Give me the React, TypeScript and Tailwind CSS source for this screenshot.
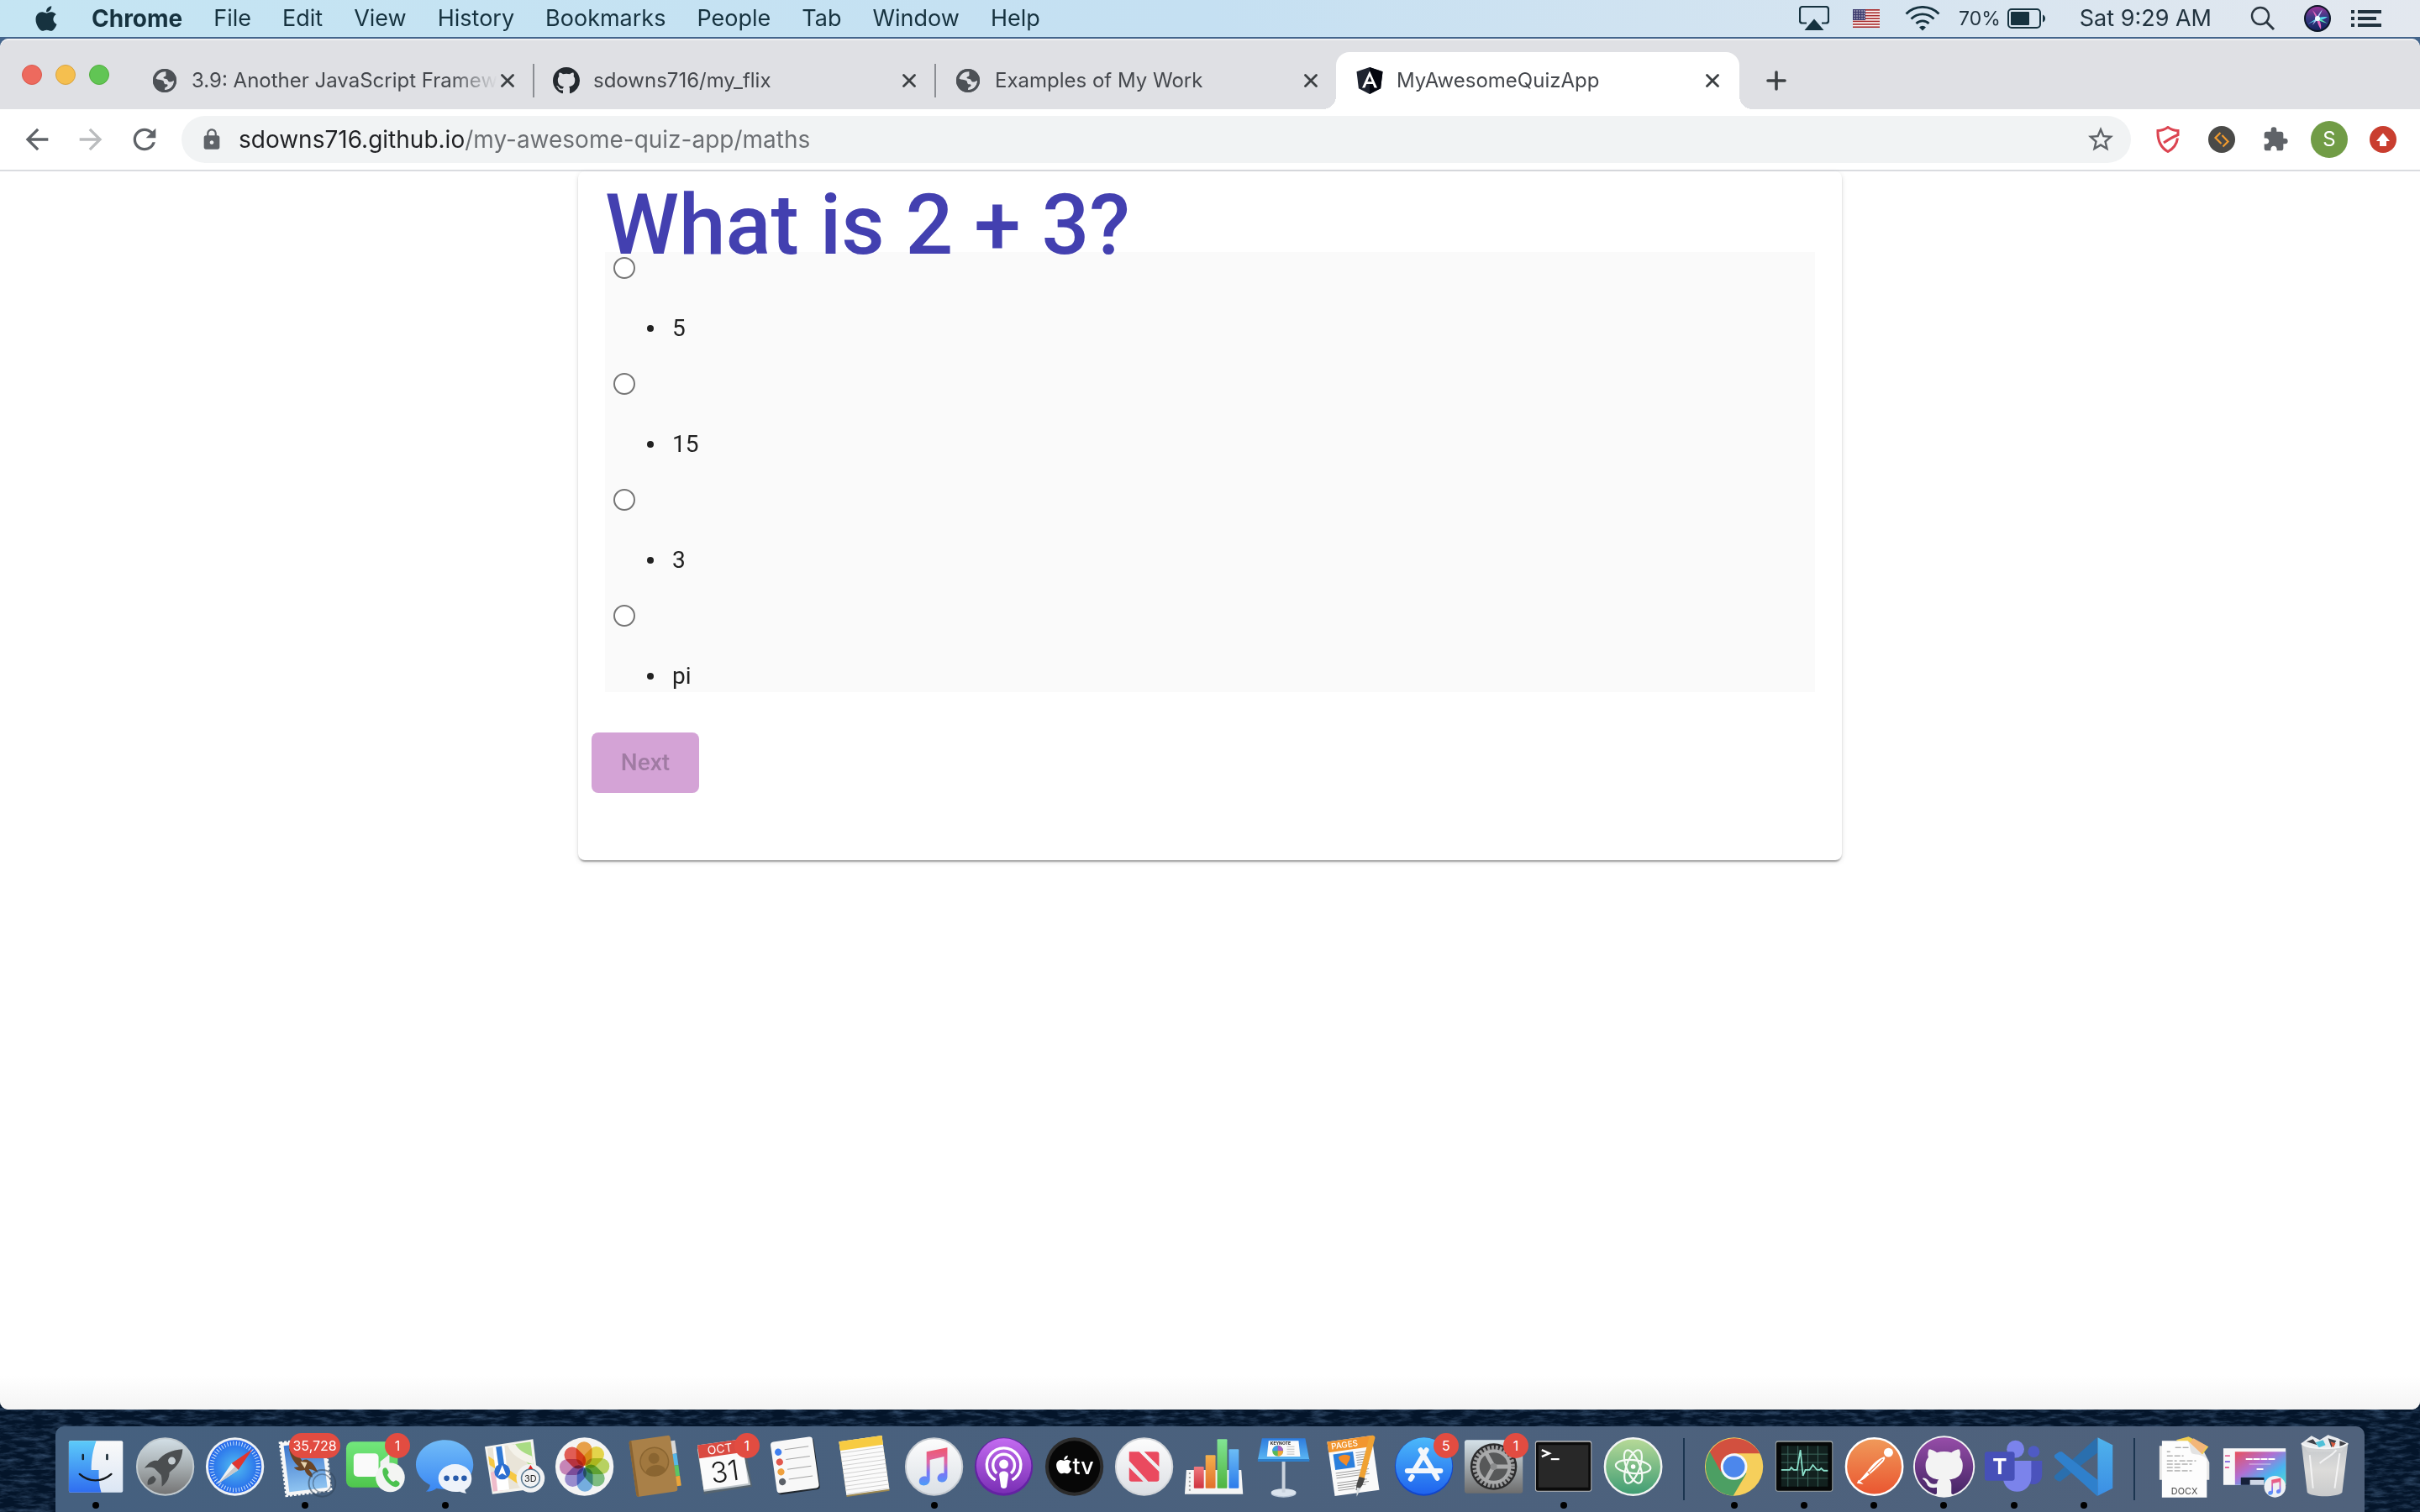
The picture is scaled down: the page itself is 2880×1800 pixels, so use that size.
import type { ReactNode } from "react";
import { FaApple } from "react-icons/fa";
import { MdArrowBack, MdArrowForward, MdExtension, MdLock, MdRefresh, MdStarBorder } from "react-icons/md";

/* ---------- Menu bar ---------- */

const menus = ["File", "Edit", "View", "History", "Bookmarks", "People", "Tab", "Window", "Help"];

function AirPlayIcon() {
  return (
    <svg className="h-[30px] w-9" viewBox="0 0 36 30">
      <path d="M9 20.500H4a3 3 0 0 1-3-3V4a3 3 0 0 1 3-3h28a3 3 0 0 1 3 3v13.500a3 3 0 0 1-3 3h-5" fill="none" stroke="#16323f" strokeWidth="2.200" />
      <path d="M18 15.500 29.500 29h-23z" fill="#16323f" />
    </svg>
  );
}

function FlagIcon() {
  return (
    <svg className="h-[22px] w-8" viewBox="0 0 32 22">
      <rect width="32" height="22" fill="#fff" />
      {[0, 1, 2, 3, 4, 5, 6].map((i) => (
        <rect key={i} y={i * 3.4} width="32" height="1.700" fill="#a82a2c" />
      ))}
      <rect width="15" height="13" fill="#3c3b6e" />
      {[2, 5, 8, 11].map((y) =>
        [2, 5, 8, 11, 13.500].map((x) => <circle key={x + "-" + y} cx={x} cy={y} r=".7" fill="#fff" />),
      )}
    </svg>
  );
}

function WifiIcon() {
  return (
    <svg className="h-[30px] w-[42px]" viewBox="0 0 42 30" fill="none" stroke="#16323f" strokeWidth="2.800">
      <path d="M1.500 9.500a27.500 27.500 0 0 1 39 0" />
      <path d="M7.500 15.500a19 19 0 0 1 27 0" />
      <path d="M13.500 21a10.600 10.600 0 0 1 15 0" />
      <path d="M21 29.500l-4-4a5.600 5.600 0 0 1 8 0z" fill="#16323f" stroke="none" />
    </svg>
  );
}

function BatteryIcon() {
  return (
    <svg className="h-6 w-[46px]" viewBox="0 0 46 24">
      <rect x="1" y="1" width="38" height="22" rx="4" fill="none" stroke="#16323f" strokeWidth="2" />
      <rect x="4" y="4" width="22" height="16" rx="1" fill="#16323f" />
      <path d="M42 7.500c4 1.500 4 7.500 0 9z" fill="#16323f" />
    </svg>
  );
}

function SiriIcon() {
  return (
    <svg className="size-8" viewBox="0 0 32 32">
      <defs>
        <linearGradient id="siri" x1=".4" y1="0" x2=".5" y2="1">
          <stop offset="0" stopColor="#a4319a" />
          <stop offset=".45" stopColor="#3a3a86" />
          <stop offset="1" stopColor="#12205c" />
        </linearGradient>
      </defs>
      <circle cx="16" cy="16" r="15" fill="url(#siri)" stroke="#0c1626" strokeWidth="2" />
      <path d="M4 23c4-3 8-5 11-7 5-2 8-2 13-2-4 3-8 4-12 4-4 1-8 3-12 5z" fill="#57d8ec" />
      <path d="M10 6c4 4 6 7 7 10 2 3 4 8 3 13-3-4-4-9-5-12-2-4-3-7-5-11z" fill="#e86ac0" />
      <path d="M22 5c-2 5-4 8-5 11l-7 8c2-5 4-8 5-9 2-3 4-7 7-10z" fill="#b4c6fa" />
      <path d="M17 15l11 7-12-4z" fill="#5be3b5" />
      <circle cx="16" cy="16" r="3" fill="#eafcff" />
    </svg>
  );
}

function MenuBar() {
  return (
    <header className="flex h-11 items-center justify-between bg-linear-to-r from-[#c5e5f3] via-[#c5e0f2] to-[#e3e8ef] pr-[46px] pl-[38px] text-[27px] text-[#16323f]">
      <nav className="flex items-center gap-[37px]">
        <button aria-label="Apple menu" className="text-[34px]">
          <FaApple />
        </button>
        <button className="text-[28px] font-bold">Chrome</button>
        {menus.map((m) => (
          <button key={m}>{m}</button>
        ))}
      </nav>
      <div className="flex items-center text-[#22333f]">
        <AirPlayIcon />
        <span className="ml-7">
          <FlagIcon />
        </span>
        <span className="ml-[30px]">
          <WifiIcon />
        </span>
        <span className="ml-[22px] text-[23px]">70%</span>
        <span className="ml-2">
          <BatteryIcon />
        </span>
        <span className="ml-10">Sat 9:29 AM</span>
        <button aria-label="Search" className="ml-[46px]">
          <svg className="size-[30px]" viewBox="0 0 30 30" fill="none" stroke="#2b3640" strokeWidth="2.400">
            <circle cx="12" cy="12" r="10" />
            <path d="M19 19l9 9" strokeWidth="3" />
          </svg>
        </button>
        <button aria-label="Siri" className="ml-[34px]">
          <SiriIcon />
        </button>
        <button aria-label="Notifications" className="ml-6">
          <svg className="h-5 w-9" viewBox="0 0 36 20" fill="#22333f">
            <path d="M0 0h4v4H0zM0 8h4v4H0zM0 16h4v4H0zM8 0h28v4H8zM8 8h22v4H8zM8 16h28v4H8z" />
          </svg>
        </button>
      </div>
    </header>
  );
}

/* ---------- Browser window ---------- */

const githubMark =
  "M8 0C3.580 0 0 3.580 0 8c0 3.540 2.290 6.530 5.470 7.590.4.070.55-.17.55-.38 0-.19-.01-.82-.01-1.490-2.010.37-2.530-.49-2.690-.94-.09-.23-.48-.94-.82-1.130-.28-.15-.68-.52-.01-.53.63-.01 1.080.58 1.230.82.72 1.210 1.870.87 2.330.66.07-.52.28-.87.51-1.070-1.780-.2-3.640-.89-3.640-3.950 0-.87.31-1.590.82-2.150-.08-.2-.36-1.020.08-2.120 0 0 .67-.21 2.200.82.64-.18 1.320-.27 2-.27s1.360.09 2 .27c1.530-1.040 2.200-.82 2.200-.82.44 1.100.16 1.920.08 2.120.51.56.82 1.270.82 2.150 0 3.070-1.870 3.750-3.650 3.950.29.25.54.73.54 1.480 0 1.070-.01 1.930-.01 2.200 0 .21.15.46.55.38A8.010 8.010 0 0 0 16 8c0-4.420-3.580-8-8-8z";

function GithubIcon() {
  return (
    <svg className="size-8" viewBox="0 0 16 16">
      <path fill="#24292e" fillRule="evenodd" d={githubMark} />
    </svg>
  );
}

function GlobeIcon() {
  return (
    <svg className="size-7" viewBox="0 0 28 28">
      <circle cx="14" cy="14" r="14" fill="#4d5156" />
      <path
        d="M15.500 3.200C9.500 3 5 6.500 3.500 11.500c2.500 1.800 6 .8 8.500 2.500 1.700 1.200.5 3.300 2.500 4.200 1.800.8 3.500-.4 3 1.800-.4 1.700-2.800 1.200-3.200 2.800-.2.800-.3 1.600-.3 2.200 6 .2 11-4.500 11-11-2 .5-3.500 2-5.300 1.500-2.500-.7-1.200-2.700-4-3.500-1.500-.4-3.500-.3-3.200-1.800.3-1.300 2.600-.6 3-2.400.2-1.500-.4-2.600 0-4.600z"
        fill="#dfe0e4"
      />
      <circle cx="14" cy="14" r="12.600" fill="none" stroke="#4d5156" strokeWidth="2.800" />
    </svg>
  );
}

function AngularIcon() {
  return (
    <svg className="size-8" viewBox="0 0 32 32">
      <path d="M16 0l15.500 5.300-2.400 20L16 32 2.900 25.300.5 5.300z" fill="#1f2430" />
      <path d="M16 0l15.500 5.300-2.400 20L16 32z" fill="#04060f" />
      <path d="M16 4.500 7 24.500h3.400l1.800-4.500h7.600l1.800 4.500H25zm0 6.300 2.700 6.500h-5.400z" fill="#fff" />
    </svg>
  );
}

function CloseIcon() {
  return (
    <svg className="size-4" viewBox="0 0 16 16" stroke="#3c4043" strokeWidth="2.800" strokeLinecap="round">
      <path d="M1.500 1.500l13 13M14.500 1.500l-13 13" />
    </svg>
  );
}

type TabProps = { icon: ReactNode; title: string; active?: boolean; divider?: boolean; fade?: boolean };

function BrowserTab({ icon, title, active, divider, fade }: TabProps) {
  return (
    <div className={active ? "relative flex h-[68px] w-[480px] items-center rounded-t-2xl bg-white px-6" : "relative flex h-[68px] w-[478px] items-center pr-[22px] pl-6"}>
      {active && (
        <>
          <span className="absolute bottom-0 -left-4 size-4 bg-[radial-gradient(circle_at_0_0,transparent_16px,white_16px)]" />
          <span className="absolute -right-4 bottom-0 size-4 bg-[radial-gradient(circle_at_100%_0,transparent_16px,white_16px)]" />
        </>
      )}
      <button role="tab" aria-selected={!!active} className="flex flex-1 items-center gap-4">
        <span className="flex w-8 shrink-0 justify-center">{icon}</span>
        <span className={fade ? "whitespace-nowrap mask-r-from-85% mask-r-to-100%" : "whitespace-nowrap"}>{title}</span>
      </button>
      <button aria-label={"Close " + title}>
        <CloseIcon />
      </button>
      {divider && <span className="absolute -right-[2px] h-10 w-[2px] bg-[#8b8e93]" />}
    </div>
  );
}

function TabStrip() {
  return (
    <div className="flex h-[84px] items-end rounded-t-[10px] border-t-2 border-[#f0f0f2] bg-[#dfe0e4] pl-[26px] text-[24px] text-[#45484d]">
      <div className="flex h-[68px] items-center gap-4 pb-[14px]">
        <button aria-label="Close window" className="size-6 rounded-full border border-[#d9584c] bg-[#ed6a5e]" />
        <button aria-label="Minimize window" className="size-6 rounded-full border border-[#d9a33f] bg-[#f5bf4f]" />
        <button aria-label="Zoom window" className="size-6 rounded-full border border-[#50ae3c] bg-[#61c554]" />
      </div>
      <div role="tablist" className="ml-[26px] flex">
        <BrowserTab icon={<GlobeIcon />} title="3.9: Another JavaScript Framew" divider fade />
        <BrowserTab icon={<GithubIcon />} title="sdowns716/my_flix" divider />
        <BrowserTab icon={<GlobeIcon />} title="Examples of My Work" />
        <BrowserTab icon={<AngularIcon />} title="MyAwesomeQuizApp" active />
      </div>
      <button aria-label="New tab" className="ml-8 flex h-[68px] items-center">
        <svg className="size-6" viewBox="0 0 24 24" stroke="#3c4043" strokeWidth="3.600" strokeLinecap="round">
          <path d="M12 2v20M2 12h20" />
        </svg>
      </button>
    </div>
  );
}

function Toolbar() {
  return (
    <div className="flex h-[74px] items-center border-b-2 border-[#dadce0] bg-white pr-7 pl-6 text-[#5f6368]">
      <button aria-label="Back">
        <MdArrowBack className="size-10" />
      </button>
      <button aria-label="Forward" className="ml-6 text-[#babcbe]">
        <MdArrowForward className="size-10" />
      </button>
      <button aria-label="Reload" className="ml-6">
        <MdRefresh className="size-10" />
      </button>
      <div className="ml-6 flex h-14 flex-1 items-center rounded-full bg-[#f1f3f4] pr-[18px] pl-[22px]">
        <MdLock className="size-7 text-[#5f6368]" />
        <input
          aria-label="Address"
          defaultValue="sdowns716.github.io/my-awesome-quiz-app/maths"
          className="ml-[18px] flex-1 bg-[linear-gradient(90deg,#202124_269px,#6b6e72_269px)] bg-clip-text text-[28px] text-transparent outline-none"
        />
        <button aria-label="Bookmark this page">
          <MdStarBorder className="size-9" />
        </button>
      </div>
      <button aria-label="Shield extension" className="ml-7">
        <svg className="size-8" viewBox="0 0 32 32" fill="none" stroke="#dc4451" strokeWidth="3">
          <path d="M27.500 14.500C26.500 22 21.500 27.500 16 30.500 8 26 3.500 18 4 5.500c4.500 0 8.500-1.500 12-4 3.500 2.500 7.500 4 12 4v5c-5 2-9 4-17 9.500" />
        </svg>
      </button>
      <button aria-label="Code extension" className="ml-8">
        <svg className="size-8" viewBox="0 0 32 32" fill="none" stroke="#f29b2e" strokeWidth="2.200">
          <circle cx="16" cy="16" r="16" fill="#4a4a48" stroke="none" />
          <path d="M14.500 8 8.500 14l7 7M17.500 24.500l6-6-7-7.500" />
        </svg>
      </button>
      <button aria-label="Extensions" className="ml-8">
        <MdExtension className="size-8" />
      </button>
      <button aria-label="Profile" className="ml-[26px] size-11 rounded-full bg-[#719c46] text-[24px] text-white">
        S
      </button>
      <button aria-label="Update" className="ml-[26px]">
        <svg className="size-8" viewBox="0 0 32 32">
          <circle cx="16" cy="16" r="16" fill="#c93e2f" />
          <path d="M16 8.500 24 18h-4v6h-8v-6H8z" fill="#fff" />
        </svg>
      </button>
    </div>
  );
}

const answers = ["5", "15", "3", "pi"];

function QuizCard() {
  return (
    <main className="mx-auto w-[1504px] max-w-full rounded-lg bg-white px-4 pb-20 font-[Roboto,sans-serif] text-[28px] text-[#212121] shadow-[0_4px_2px_-2px_rgba(0,0,0,0.2),0_2px_2px_rgba(0,0,0,0.14),0_2px_6px_rgba(0,0,0,0.12)]">
      <div className="px-4">
        <h1 className="h-24 text-[100px] leading-[128px] font-medium whitespace-nowrap text-[#4340b0]">
          What is 2 + 3?
        </h1>
        <div className="flex flex-col gap-7 bg-[#fafafa]">
          {answers.map((a) => (
            <div key={a}>
              <div className="flex h-[38px] items-center pl-[10px]">
                <input type="radio" name="answer" id={"answer-" + a} className="size-[26px] appearance-none rounded-full border-2 border-[#767676] bg-white" />
              </div>
              <ul className="mt-[34px] pl-[50px] leading-[38px]">
                <li className="flex items-center gap-[22px] before:size-2 before:rounded-full before:bg-[#212121]">
                  <label htmlFor={"answer-" + a}>{a}</label>
                </li>
              </ul>
            </div>
          ))}
        </div>
      </div>
      <button disabled className="mt-12 block h-[72px] w-32 rounded-lg bg-[#d4a3d6] font-medium text-[#a07ba3]">
        Next
      </button>
    </main>
  );
}

/* ---------- Dock icons, each on an 84 × 84 grid ---------- */

function Icon({ children }: { children: ReactNode }) {
  return (
    <svg className="h-21 w-full overflow-visible" viewBox="0 0 84 84">
      {children}
    </svg>
  );
}

type Stop = [number, string];

function Grad({ id, stops }: { id: string; stops: Stop[] }) {
  return (
    <linearGradient id={id} x1="0" y1="0" x2="0" y2="1">
      {stops.map(([o, c]) => (
        <stop key={o} offset={o} stopColor={c} />
      ))}
    </linearGradient>
  );
}

const Finder = () => (
  <Icon>
    <Grad id="fnd" stops={[[0, "#5ccbf9"], [1, "#2f6df0"]]} />
    <Grad id="fnd2" stops={[[0, "#fafafa"], [1, "#dbe6f4"]]} />
    <rect x="10" y="11" width="65" height="62" rx="2" fill="url(#fnd2)" />
    <path d="M12 11h31c-4 11-6 22-6 35h9c0 9 0 18 3 27H12a2 2 0 0 1-2-2V13a2 2 0 0 1 2-2z" fill="url(#fnd)" />
    <path d="M27 28v5M56 28v5" stroke="#14242f" strokeWidth="2.600" strokeLinecap="round" />
    <path d="M23 51c11 10 27 10 38 0" fill="none" stroke="#14181d" strokeWidth="2.400" strokeLinecap="round" />
  </Icon>
);

const Launchpad = () => (
  <Icon>
    <Grad id="lp" stops={[[0, "#d3e0e7"], [0.5, "#a7aeb1"], [1, "#737373"]]} />
    <circle cx="42" cy="42" r="34" fill="url(#lp)" stroke="#c0c9ce" strokeWidth="2" />
    <path d="M63 21c-13 1-23 5-30 14-5-1-10 1-16 9 6-2 9-1 12 0l8 8c1 3 1 7 1 14 7-6 9-11 9-17 9-7 15-14 16-28zM28 53c-6 2-8 6-7 11 6 0 9-3 10-7z" fill="#4b4e50" />
    <circle cx="50" cy="35" r="4.500" fill="#c4ccd0" />
  </Icon>
);

const Safari = () => (
  <Icon>
    <radialGradient id="sf">
      <stop offset="0" stopColor="#51bdf1" />
      <stop offset="1" stopColor="#2466ea" />
    </radialGradient>
    <circle cx="42" cy="42" r="35" fill="#eef1f4" />
    <circle cx="42" cy="42" r="32" fill="url(#sf)" />
    <circle cx="42" cy="42" r="28" fill="none" stroke="#cfe6fb" strokeWidth="5" strokeDasharray="1 2.500" />
    <path d="M63 21 38 38l8 8z" fill="#e0352f" />
    <path d="M21 63 38 38l8 8z" fill="#f0f0f0" />
    <path d="M21 63 42 42l4 4z" fill="#c5c8cc" />
  </Icon>
);

const Mail = () => (
  <Icon>
    <Grad id="ml" stops={[[0, "#3c76cc"], [1, "#8fc4f1"]]} />
    <g transform="rotate(-7 42 42)">
      <rect x="15" y="10" width="54" height="64" fill="#f7f7f7" stroke="#f7f7f7" strokeWidth="3" strokeDasharray="3 2" />
      <rect x="19" y="14" width="46" height="56" fill="url(#ml)" />
    </g>
    <path d="M22 20c7 4 12 8 16 15 3-2 6-2 8 0 3 1 6 3 11 14-6-3-8-4-11-4 3 4 5 6 4 10-5-2-8-5-9-9-7 2-10 0-13-3l6-1c-6-5-10-12-12-22z" fill="#6b4526" />
    <path d="M36 36l8 1-3 7z" fill="#e6d3ae" />
    <circle cx="62" cy="62" r="16" fill="none" stroke="#34485e" strokeOpacity=".6" strokeWidth="2" />
    <circle cx="62" cy="62" r="11" fill="none" stroke="#34485e" strokeOpacity=".5" strokeWidth="1.500" />
  </Icon>
);

const FaceTime = () => (
  <Icon>
    <Grad id="ft" stops={[[0, "#72e77c"], [1, "#4fc64d"]]} />
    <rect x="7" y="12" width="62" height="55" rx="8" fill="url(#ft)" />
    <rect x="16" y="26" width="30" height="28" rx="5" fill="#fafafa" />
    <path d="M48 36l11-9v24l-11-6z" fill="#f2f2f2" />
    <circle cx="60" cy="55" r="17.500" fill="#f3f5f3" />
    <path d="M52 44c3-2 4 0 6 4 1 2-2 3-1 5 2 4 4 6 6 7 2 1 3-3 5-1 4 2 4 4 2 6-3 3-8 1-13-4s-8-14-5-17z" fill="#4cc24f" />
  </Icon>
);

const Messages = () => (
  <Icon>
    <Grad id="ms" stops={[[0, "#71bcf8"], [1, "#3a87f3"]]} />
    <path d="M42 10c19 0 34 13 34 29.500S61 69 42 69c-4 0-7 0-10-1-4 3-8 4-13 4 3-2 5-5 5-8C14 59 7 50 7 39.500 7 23 23 10 42 10z" fill="url(#ms)" />
    <path d="M54 39c12 0 20 8 20 17 0 7-3 11-8 14 0 2 1 3 2 4-4 0-6-1-8-2-15 2-26-5-26-16 0-9 9-17 20-17z" fill="#eef3fa" />
    <g fill="#275bab">
      <circle cx="44" cy="56" r="3.300" />
      <circle cx="55" cy="56" r="3.300" />
      <circle cx="65" cy="56" r="3.300" />
    </g>
  </Icon>
);

const Maps = () => (
  <Icon>
    <clipPath id="mpc">
      <path d="M9 20 61 12 67 65 16 72z" />
    </clipPath>
    <path d="M6 18 64 9 71 68 15 75z" fill="#f5f4f0" />
    <g clipPath="url(#mpc)">
      <rect x="5" y="5" width="75" height="85" fill="#e9e4d8" />
      <path d="M32 5h50v65z" fill="#a9dc84" />
      <path d="M36 10c3 14 15 22 40 28" fill="none" stroke="#f4f2ea" strokeWidth="9" />
      <path d="M5 52l22-8 3 34H5z" fill="#efbccb" />
      <path d="M7 32l60 40" stroke="#f6c844" strokeWidth="8" />
      <path d="M22 12l7 64" stroke="#fff" strokeWidth="14" />
      <path d="M22 12l5 36" stroke="#2f78d4" strokeWidth="7" />
    </g>
    <circle cx="27" cy="48" r="9.500" fill="#2c6fd1" />
    <path d="M27 40l5 13-5-3-5 3z" fill="#fff" />
    <circle cx="61" cy="56" r="17" fill="#f1f2f3" />
    <circle cx="61" cy="56" r="11" fill="none" stroke="#5b7b94" strokeWidth="1.500" />
    <path d="M61 40l3 5h-6z" fill="#d22" />
    <text x="61" y="60" textAnchor="middle" fontSize="11" fill="#222">3D</text>
  </Icon>
);

const petals: Stop[] = [[0, "#f0982d"], [45, "#ecd92f"], [90, "#b4d54a"], [135, "#6dbb71"], [180, "#63a8e4"], [225, "#8e7fd0"], [270, "#c776b4"], [315, "#e9453c"]];

const Photos = () => (
  <Icon>
    <circle cx="42" cy="42" r="35" fill="#f4f4f4" />
    {petals.map(([deg, c]) => (
      <rect key={deg} x="32" y="12" width="19" height="29" rx="9.500" fill={c} opacity=".85" transform={"rotate(" + deg + " 42 42)"} className="mix-blend-multiply" />
    ))}
  </Icon>
);

const Contacts = () => (
  <Icon>
    <g transform="rotate(-8 42 42)">
      <path d="M62 14h8v16h-8z" fill="#d8d8d8" />
      <path d="M62 30h8v14h-8z" fill="#58b7e8" />
      <path d="M62 44h8v13h-8z" fill="#5cc565" />
      <path d="M62 57h8v12h-8z" fill="#eba63a" />
      <rect x="15" y="7" width="50" height="68" rx="3" fill="#a98048" />
      <path d="M15 10a3 3 0 0 1 3-3v68a3 3 0 0 1-3-3z" fill="#8a6432" />
      <circle cx="42" cy="36" r="17" fill="#a1783f" stroke="#8a6531" strokeWidth="1.500" />
      <circle cx="42" cy="32" r="6.500" fill="#8a6531" />
      <path d="M30 47c4-9 20-9 24 0-6 8-18 8-24 0z" fill="#8a6531" />
    </g>
  </Icon>
);

const Calendar = () => (
  <Icon>
    <path d="M8 19l57-7 10 54-58 9z" fill="#56646f" />
    <path d="M9 21l52-8 12 51-56 8z" fill="#bfc6ca" />
    <g transform="rotate(-8 42 42)">
      <rect x="13" y="12" width="54" height="54" fill="#fbfbfb" />
      <rect x="13" y="12" width="54" height="16" fill="#da4a41" />
      <text x="39" y="25" textAnchor="middle" fontSize="14" fill="#fff">OCT</text>
      <text x="41" y="60" textAnchor="middle" fontSize="34" fontWeight="300" fill="#1c1c1c">31</text>
    </g>
  </Icon>
);

const Reminders = () => (
  <Icon>
    <g transform="rotate(-8 42 42)">
      <rect x="18" y="11" width="51" height="62" rx="4" fill="#20272e" />
      <rect x="17" y="9" width="51" height="62" rx="4" fill="#f8f8f8" />
      {["#3f7ff0", "#e2574c", "#efa03d", "#5b6067"].map((c, i) => (
        <g key={c}>
          <circle cx="25" cy={22 + i * 12} r="4.200" fill={c} />
          <path d={"M33 " + (20 + i * 12) + "h29"} stroke="#a4a4a4" />
        </g>
      ))}
    </g>
  </Icon>
);

const Notes = () => (
  <Icon>
    <g transform="rotate(-8 42 42)">
      <rect x="16" y="8" width="52" height="67" fill="#9c8850" />
      <rect x="16" y="8" width="52" height="65" fill="#fbfbfb" />
      <rect x="16" y="8" width="52" height="11" fill="#f7cb42" />
      {[0, 1, 2, 3, 4, 5, 6, 7, 8, 9, 10].map((i) => (
        <path key={i} d={"M16 " + (22 + i * 5) + "h52"} stroke="#d1d1d1" />
      ))}
    </g>
  </Icon>
);

function NotePath() {
  return <path d="M33 24l25-5v35c0 8-12 9-12 2 0-5 5-7 8-6V30l-17 4v24c0 8-13 9-13 2 0-6 6-7 9-6z" fill="url(#note)" />;
}

const Music = () => (
  <Icon>
    <Grad id="mus" stops={[[0, "#fdfdfd"], [1, "#dbe0e6"]]} />
    <Grad id="note" stops={[[0, "#f0566b"], [0.4, "#dc69a9"], [0.65, "#7b74f5"], [1, "#4c9df8"]]} />
    <circle cx="42" cy="42" r="34" fill="url(#mus)" stroke="#c6cbd1" strokeWidth="2" />
    <NotePath />
  </Icon>
);

const Podcasts = () => (
  <Icon>
    <Grad id="pod" stops={[[0, "#c36bf0"], [1, "#7a2fb5"]]} />
    <circle cx="42" cy="42" r="35" fill="#6422a3" />
    <circle cx="42" cy="41" r="33" fill="url(#pod)" />
    <g fill="none" stroke="#fff" strokeWidth="3.400">
      <path d="M32 58a20.500 20.500 0 1 1 20 0" />
      <path d="M33.500 50a13 13 0 1 1 17 0" />
    </g>
    <circle cx="42" cy="39" r="5.500" fill="#fff" />
    <path d="M36.500 52c0-6 11-6 11 0l-2 14c-1 3-6 3-7 0z" fill="#fff" />
  </Icon>
);

const AppleTv = () => (
  <Icon>
    <circle cx="42" cy="42" r="35" fill="#2c2c2c" />
    <circle cx="42" cy="42" r="31" fill="#070707" />
    <FaApple color="#fff" x="17" y="27" size={25} />
    <text x="40" y="51" fontSize="27" fontWeight="500" fill="#fff">tv</text>
  </Icon>
);

const News = () => (
  <Icon>
    <Grad id="nw" stops={[[0, "#fdfdfd"], [1, "#dcdfe4"]]} />
    <circle cx="42" cy="42" r="34" fill="url(#nw)" stroke="#d3d6da" strokeWidth="2" />
    <path d="M24 24h12l24 24v9a3 3 0 0 1-3 3H47L24 35zM42 24h15a3 3 0 0 1 3 3v15zM24 43v14a3 3 0 0 0 3 3h14z" fill="#ea4a5f" />
  </Icon>
);

const Numbers = () => (
  <Icon>
    <Grad id="n1" stops={[[0, "#ef7a7f"], [1, "#cf3440"]]} />
    <Grad id="n2" stops={[[0, "#f4b04c"], [1, "#e2702c"]]} />
    <Grad id="n3" stops={[[0, "#82e594"], [1, "#4fb440"]]} />
    <Grad id="n4" stops={[[0, "#6cbdf6"], [1, "#2c7bea"]]} />
    <path d="M9 46h66l2 29H7z" fill="#f5f5f5" />
    <path d="M13 49v22" stroke="#999" strokeWidth="2" strokeDasharray="2 3" />
    <rect x="18" y="42" width="12" height="26" rx="1" fill="url(#n1)" />
    <rect x="32" y="28" width="12" height="40" rx="1" fill="url(#n2)" />
    <rect x="46" y="9" width="12" height="59" rx="1" fill="url(#n3)" />
    <rect x="60" y="21" width="12" height="47" rx="1" fill="url(#n4)" />
  </Icon>
);

const Keynote = () => (
  <Icon>
    <Grad id="kn" stops={[[0, "#2e7cde"], [1, "#5cb8f4"]]} />
    <ellipse cx="42" cy="74" rx="15" ry="5" fill="#b9c7d7" />
    <ellipse cx="42" cy="73" rx="15" ry="4.500" fill="#dae3ed" />
    <path d="M40 36h4v37h-4z" fill="#c9d2dd" />
    <path d="M16 8h52l5 26H11z" fill="url(#kn)" />
    <path d="M11 33h62v3H11z" fill="#2f7fca" />
    <path d="M24 11h36l2 19H22z" fill="#fbfbfb" />
    <text x="26" y="16" fontSize="5" fontWeight="800" fill="#333">KEYNOTE</text>
    <circle cx="35" cy="23" r="6.500" fill="#58b957" />
    <path d="M35 23v-6.500a6.500 6.500 0 0 0-6.500 6.500z" fill="#3d9be9" />
    <path d="M35 23v-6.500a6.500 6.500 0 0 1 6.500 6.500z" fill="#a55fc9" />
    <path d="M35 23h6.500a6.500 6.500 0 0 1-6.500 6.500z" fill="#f2a33a" />
    <path d="M46 18h9M46 21h9M46 24h9M46 27h9" stroke="#bbb" />
  </Icon>
);

const Pages = () => (
  <Icon>
    <g transform="rotate(-8 42 42)">
      <rect x="15" y="8" width="54" height="66" fill="#fafafa" />
      <rect x="15" y="8" width="54" height="13" fill="#f2962f" />
      <text x="19" y="18" fontSize="10" fontWeight="500" fill="#fff">PAGES</text>
      <rect x="20" y="24" width="24" height="19" fill="#2b7fdc" />
      <path d="M26 28c6-3 10-2 14 1-1 6-4 6-6 11-3-4-8-6-8-12z" fill="#f48a25" />
      <path d="M47 26h14M47 29h14M47 32h14M47 35h14M47 38h14M47 41h14M20 47h40M20 50h38M20 53h40M20 59h36M20 62h38M20 65h34M20 68h20" stroke="#9b9b9b" />
    </g>
    <path d="M61 7c1-4 8-3 7 1L55 57h-7z" fill="#f0a233" />
    <path d="M49 54l7 2-3 8-5 7-3-1 1-7z" fill="#474747" />
    <path d="M46 67l5 1-5 10z" fill="#d9dde0" />
  </Icon>
);

const AppStore = () => (
  <Icon>
    <Grad id="as" stops={[[0, "#4cb9fa"], [1, "#1f63ee"]]} />
    <circle cx="42" cy="42" r="35" fill="#1146cc" />
    <circle cx="42" cy="41" r="34" fill="url(#as)" />
    <g stroke="#f4f7fb" strokeWidth="6" strokeLinecap="round">
      <path d="M45 22 30 47M38 22l20 34M22 47h40M28 54l-2 3" />
    </g>
  </Icon>
);

const Settings = () => (
  <Icon>
    <Grad id="st" stops={[[0, "#d5e2e9"], [1, "#6d6d6d"]]} />
    <rect x="7" y="10" width="70" height="64" rx="3" fill="url(#st)" />
    <circle cx="42" cy="42" r="28" fill="#2b2b2c" />
    <circle cx="42" cy="42" r="23" fill="#3c3c3d" stroke="#9b9c9d" strokeWidth="5" strokeDasharray="3 2" />
    <circle cx="42" cy="42" r="19" fill="#575859" stroke="#a9aaab" strokeWidth="4" />
    <path d="M42 42h19M42 42l-9-16M42 42l-9 16" stroke="#a9aaab" strokeWidth="5" />
    <circle cx="42" cy="42" r="4" fill="#8a8b8c" />
  </Icon>
);

const Terminal = () => (
  <Icon>
    <rect x="8" y="11" width="68" height="61" rx="3" fill="#b9b9b9" />
    <rect x="9" y="12.500" width="66" height="58.500" rx="2" fill="#0b0b0b" />
    <rect x="12" y="16" width="60" height="51" fill="#282828" />
    <path d="M16 22l9 4-9 4" fill="none" stroke="#fff" strokeWidth="2.500" />
    <path d="M27 33h10" stroke="#fff" strokeWidth="2.200" />
  </Icon>
);

const Atom = () => (
  <Icon>
    <Grad id="at" stops={[[0, "#b8da98"], [1, "#3e9c73"]]} />
    <circle cx="42" cy="42" r="34" fill="url(#at)" stroke="#f2f4f2" strokeWidth="2.500" />
    <g fill="none" stroke="#f4faf4" strokeWidth="2.200">
      <ellipse cx="42" cy="42" rx="21" ry="8" transform="rotate(5 42 42)" />
      <ellipse cx="42" cy="42" rx="21" ry="8" transform="rotate(68 42 42)" />
      <ellipse cx="42" cy="42" rx="21" ry="8" transform="rotate(-70 42 42)" />
    </g>
    <circle cx="42" cy="42" r="2.800" fill="#fff" />
  </Icon>
);

const Chrome = () => (
  <Icon>
    <circle cx="42" cy="42" r="35" fill="#f6cf5b" />
    <path d="M42 42 13 24a35 35 0 0 0 28 53l16-27z" fill="#4c9f63" />
    <path d="M42 42 26 48 13 24a35 35 0 0 1 60 2H42z" fill="#d2503f" />
    <circle cx="42" cy="42" r="16" fill="#f5f7fb" />
    <circle cx="42" cy="42" r="13" fill="#4c87ec" />
  </Icon>
);

const Activity = () => (
  <Icon>
    <rect x="7" y="11" width="69" height="61" rx="3" fill="#9aa0a0" />
    <rect x="8" y="12.500" width="67" height="58.500" rx="2" fill="#060808" />
    <rect x="14" y="17" width="56" height="49" fill="#12211f" />
    <path d="M14 27h56M14 37h56M14 46h56M14 56h56M22 17v49M34 17v49M46 17v49M58 17v49" stroke="#3c665c" />
    <path d="M14 46h10l2-3 3 3h4l4-24 3 31 3-7h5l4-6 5 6h3l2-2 3 3h5" fill="none" stroke="#8ae0cb" strokeWidth="1.800" />
  </Icon>
);

const Postman = () => (
  <Icon>
    <Grad id="pm" stops={[[0, "#f09a5a"], [1, "#ea5530"]]} />
    <circle cx="42" cy="42" r="34" fill="url(#pm)" stroke="#fff" strokeWidth="2.500" />
    <circle cx="59" cy="25" r="5.500" fill="#fff" />
    <path d="M54 30c-8 3-14 9-20 17L23 60c6-2 8-4 11-7 9-6 16-10 21-21z" fill="#fff" />
    <path d="M52 33 36 49m17-12L38 51M34 48l4 5" stroke="#ee7541" strokeWidth="1.200" />
    <path d="M21 62l8 1-6-5z" fill="#fff" />
  </Icon>
);

const GithubApp = () => (
  <Icon>
    <Grad id="gh" stops={[[0, "#964da8"], [1, "#452566"]]} />
    <circle cx="42" cy="42" r="37" fill="#f3f3f3" />
    <path fill="url(#gh)" fillRule="evenodd" transform="translate(7 7) scale(4.375)" d={githubMark} />
  </Icon>
);

const Teams = () => (
  <Icon>
    <circle cx="66" cy="24" r="7" fill="#4f5bc4" />
    <path d="M56 35h20v16c0 13-13 15-20 9z" fill="#4b53bc" />
    <circle cx="44" cy="21" r="10.500" fill="#7b83eb" />
    <path d="M29 35h34v19c0 24-34 24-34 0z" fill="#7b83eb" />
    <rect x="7" y="24" width="36" height="35" rx="3" fill="#4650b8" />
    <text x="25" y="51" textAnchor="middle" fontSize="26" fontWeight="700" fill="#fff">T</text>
  </Icon>
);

const VsCode = () => (
  <Icon>
    <Grad id="vs" stops={[[0, "#4fb2ec"], [1, "#3b8ee4"]]} />
    <path d="M7 53 58 7l1 18L14 60c-3 0-5-2-7-4z" fill="#2a6fae" />
    <path d="M7 31v-3l6-4h3l43 34v19h-1z" fill="#2f80cc" />
    <path d="M59 7 77 16v52L59 77z" fill="url(#vs)" />
  </Icon>
);

const Docx = () => (
  <Icon>
    <path d="M12 17h50l10 20v21H12z" fill="#e6e6e6" />
    <path d="M32 10l15-4 24 12-8 10z" fill="#f0cd51" />
    <path d="M53 8l16 9-7 10-14-13z" fill="#f3b679" />
    <path d="M15 11h31l23 22v46H15z" fill="#fdfdfd" />
    <path d="M46 11c4 6 2 12 5 15 4 2 12 0 18 7z" fill="#e3e3e3" />
    <path d="M31 19h16M21 24h4M21 29h20M21 35h12M36 35h20M21 39h30M21 43h18M21 47h30" stroke="#8b8b8b" strokeDasharray="7 2" />
    <text x="42" y="75" textAnchor="middle" fontSize="11" fill="#4a4a4a">DOCX</text>
  </Icon>
);

const MusicWindow = () => (
  <Icon>
    <linearGradient id="mw" x1="0" y1="0" x2="1" y2="1">
      <stop offset="0" stopColor="#e9505c" />
      <stop offset=".4" stopColor="#b06fd2" />
      <stop offset=".7" stopColor="#48b5f0" />
      <stop offset="1" stopColor="#51dbd0" />
    </linearGradient>
    <rect x="4" y="20" width="75" height="44" fill="#f7f7f8" />
    <path d="M18 24h61v40H18z" fill="url(#mw)" />
    <path d="M31 33h35" stroke="#fff" strokeWidth="2" strokeDasharray="8 1" />
    <path d="M35 39h26" stroke="#fff" strokeOpacity=".6" />
    <path d="M44 45h8" stroke="#fff" strokeWidth="2" />
    <path d="M6 29h6M6 43h5" stroke="#e2659a" strokeWidth="2" />
    <path d="M6 36h6" stroke="#8a6fe0" strokeWidth="2" />
    <path d="M25 55h28v9H25z" fill="#16203a" />
    <path d="M36 58h17v6H36z" fill="#cfd7e6" />
    <circle cx="66" cy="66" r="13" fill="#eef0f3" />
    <g transform="translate(47 47) scale(.45)">
      <NotePath />
    </g>
  </Icon>
);

const Trash = () => (
  <Icon>
    <Grad id="tr" stops={[[0, "#c9cccf"], [0.5, "#e4e2df"], [1, "#d0d0d0"]]} />
    <path d="M14 14l12-9 10 5 10-6 12 4 12 6-8 10H22z" fill="#e9ebee" />
    <path d="M20 12l8-3 5 7zM46 8l10 3-6 8zM60 11l8 3-8 5z" fill="#3e4048" />
    <path d="M31 13l9-3 3 6-8 3z" fill="#4fc0d8" />
    <path d="M49 12l6 2-3 6z" fill="#d3583d" />
    <path d="M14 14c9 8 47 8 56 0l-7 59c-5 6-37 6-42 0z" fill="url(#tr)" fillOpacity=".95" />
    <path d="M14 14c9 8 47 8 56 0" fill="none" stroke="#f4f5f6" strokeWidth="2" />
    <path d="M24 28l4 40M60 26l-6 42M36 38c6-6 14-8 20-16" stroke="#fff" strokeOpacity=".7" strokeWidth="2" fill="none" />
  </Icon>
);

type DockApp = { name: string; Art: () => ReactNode; badge?: string; running?: boolean };

const apps: DockApp[] = [
  { name: "Finder", Art: Finder, running: true },
  { name: "Launchpad", Art: Launchpad },
  { name: "Safari", Art: Safari },
  { name: "Mail", Art: Mail, badge: "35,728", running: true },
  { name: "FaceTime", Art: FaceTime, badge: "1" },
  { name: "Messages", Art: Messages, running: true },
  { name: "Maps", Art: Maps },
  { name: "Photos", Art: Photos },
  { name: "Contacts", Art: Contacts },
  { name: "Calendar", Art: Calendar, badge: "1" },
  { name: "Reminders", Art: Reminders },
  { name: "Notes", Art: Notes },
  { name: "Music", Art: Music, running: true },
  { name: "Podcasts", Art: Podcasts },
  { name: "TV", Art: AppleTv },
  { name: "News", Art: News },
  { name: "Numbers", Art: Numbers },
  { name: "Keynote", Art: Keynote },
  { name: "Pages", Art: Pages },
  { name: "App Store", Art: AppStore, badge: "5" },
  { name: "System Preferences", Art: Settings, badge: "1" },
  { name: "Terminal", Art: Terminal, running: true },
  { name: "Atom", Art: Atom },
];

const recents: DockApp[] = [
  { name: "Chrome", Art: Chrome, running: true },
  { name: "Activity Monitor", Art: Activity, running: true },
  { name: "Postman", Art: Postman, running: true },
  { name: "GitHub Desktop", Art: GithubApp, running: true },
  { name: "Teams", Art: Teams, running: true },
  { name: "Visual Studio Code", Art: VsCode, running: true },
];

const stacks: DockApp[] = [
  { name: "Documents", Art: Docx },
  { name: "Music window", Art: MusicWindow },
  { name: "Trash", Art: Trash },
];

function DockItem({ name, Art, badge, running }: DockApp) {
  return (
    <button aria-label={name} className="relative flex min-w-0 flex-1 flex-col items-center">
      <Art />
      {badge && (
        <span className="absolute top-[2px] right-0 flex h-[30px] min-w-[30px] items-center justify-center rounded-full bg-[#e24c41] px-1 text-[16px] text-white">
          {badge}
        </span>
      )}
      {running && <span className="size-2 rounded-full bg-black" />}
    </button>
  );
}

function DockDivider() {
  return (
    <div className="flex w-[37px] shrink-0 justify-center pt-2">
      <span className="h-[74px] w-[2px] bg-[#1b3550]" />
    </div>
  );
}

function Dock() {
  return (
    <footer className="px-[66px] pt-5">
      <div className="flex h-[102px] rounded-t-[10px] bg-linear-to-r from-[#45607f] to-[#50627c] px-[6px] pt-[6px]">
        {apps.map((a) => (
          <DockItem key={a.name} {...a} />
        ))}
        <DockDivider />
        {recents.map((a) => (
          <DockItem key={a.name} {...a} />
        ))}
        <DockDivider />
        {stacks.map((a) => (
          <DockItem key={a.name} {...a} />
        ))}
      </div>
    </footer>
  );
}

/* Desktop wallpaper: dark rippled water */
function Ocean() {
  return (
    <svg className="absolute inset-x-0 bottom-0 h-36 w-full" aria-hidden="true">
      <filter id="waves" x="0" y="0" width="100%" height="100%" colorInterpolationFilters="sRGB">
        <feTurbulence type="fractalNoise" baseFrequency="0.05 0.2" numOctaves="4" seed="8" />
        <feColorMatrix values="0 0 0 0 .2  0 0 0 0 .3  0 0 0 0 .42  2 0 0 0 -.85" />
      </filter>
      <rect width="100%" height="100%" fill="#04152a" />
      <rect width="100%" height="100%" filter="url(#waves)" />
    </svg>
  );
}

export default function App() {
  return (
    <div className="relative flex min-h-screen flex-col bg-[#44658c] font-[Inter,sans-serif]">
      <Ocean />
      <div className="relative flex flex-1 flex-col">
        <MenuBar />
        <div className="mt-[2px] flex flex-1 flex-col overflow-hidden rounded-[10px] bg-white">
          <TabStrip />
          <Toolbar />
          <div className="flex-1 bg-[linear-gradient(to_top,#f4f4f4,white_40px)]">
            <QuizCard />
          </div>
        </div>
        <Dock />
      </div>
    </div>
  );
}
